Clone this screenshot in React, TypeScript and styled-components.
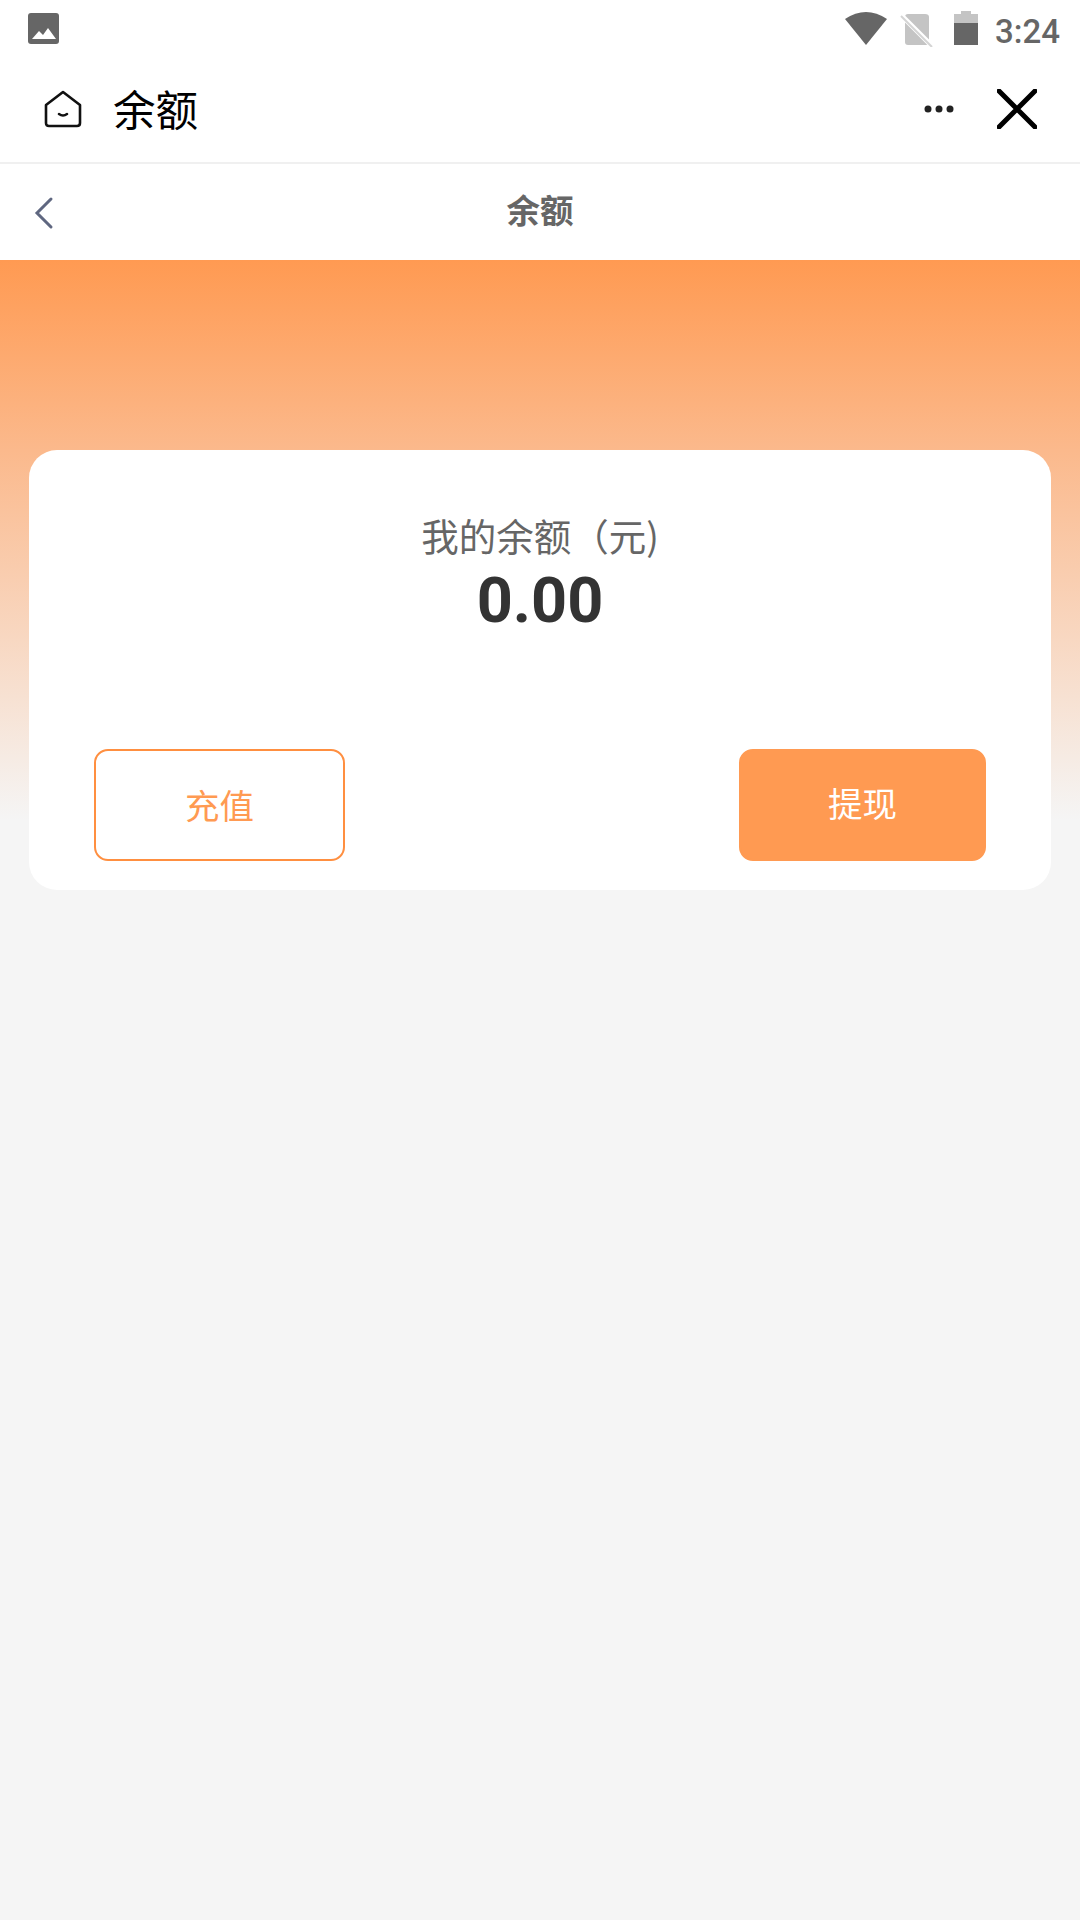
import React from "react";
import styled, { createGlobalStyle } from "styled-components";

const Global = createGlobalStyle`
  html, body { margin: 0; padding: 0; background: #f5f5f5; }
  * { box-sizing: border-box; }
  body { font-family: "Noto Sans CJK SC", "Noto Sans", sans-serif; }
`;

const Page = styled.div`
  width: 1080px;
  height: 1920px;
  display: flex;
  flex-direction: column;
  background: #f5f5f5;
  overflow: hidden;
`;

const StatusBar = styled.div`
  height: 60px;
  background: #fff;
  display: flex;
  align-items: flex-start;
  justify-content: space-between;
  padding: 12px 20px 0 28px;
`;

const StatusRight = styled.div`
  display: flex;
  align-items: flex-start;
`;

const StatusIcon = styled.svg<{ $ml: number; $mt?: number }>`
  display: block;
  margin-left: ${(p) => p.$ml}px;
  margin-top: ${(p) => p.$mt ?? 0}px;
`;

const Time = styled.span`
  font: 500 33px/1 Roboto, sans-serif;
  color: #666;
  margin-left: 17px;
  margin-top: 3px;
`;

const TitleBar = styled.div`
  height: 104px;
  background: #fff;
  display: flex;
  align-items: center;
  padding: 0 0 0 44px;
  border-bottom: 2px solid #f0f0f0;
`;

const TitleText = styled.span`
  font-size: 42.5px;
  line-height: 1;
  color: #000;
  margin-left: 31px;
  padding-bottom: 6px;
  flex: 1;
`;

const Dots = styled.svg`
  display: block;
  margin-right: 43px;
`;

const CloseIcon = styled.svg`
  display: block;
  margin-right: 43px;
`;

const NavBar = styled.div`
  height: 96px;
  background: #fff;
  display: flex;
  align-items: center;
  justify-content: center;
  position: relative;
`;

const BackIcon = styled.svg`
  position: absolute;
  left: 34px;
  top: 32px;
`;

const NavTitle = styled.span`
  font-size: 33.5px;
  font-weight: 700;
  color: #666;
  line-height: 1;
  padding-bottom: 6px;
`;

const Content = styled.div`
  flex: 1;
  padding: 190px 29px 0;
  background: linear-gradient(180deg, #ff9a52 0%, #fbb98c 34%, #f5f5f5 100%) no-repeat;
  background-size: 100% 560px;
`;

const Card = styled.div`
  height: 440px;
  background: #fff;
  border-radius: 28px;
  display: flex;
  flex-direction: column;
  align-items: center;
  padding: 63px 65px 0;
`;

const BalanceLabel = styled.div`
  font-size: 37.5px;
  line-height: 44px;
  color: #666;
`;

const BalanceValue = styled.div`
  font: 700 63px/1 Roboto, sans-serif;
  color: #333;
  margin-top: 12px;
`;

const Actions = styled.div`
  margin-top: auto;
  margin-bottom: 29px;
  width: 100%;
  display: flex;
  justify-content: space-between;
`;

const ActionButton = styled.div<{ $filled?: boolean }>`
  height: 112px;
  width: ${(p) => (p.$filled ? 247 : 251)}px;
  border-radius: 14px;
  display: flex;
  align-items: center;
  justify-content: center;
  font-size: 34.5px;
  line-height: 1;
  border: 2px solid ${(p) => (p.$filled ? "#ff9a52" : "#ff8f40")};
  background: ${(p) => (p.$filled ? "#ff9a52" : "#fff")};
  color: ${(p) => (p.$filled ? "#fff" : "#ff9a52")};
  padding-bottom: ${(p) => (p.$filled ? 5 : 2)}px;
`;

export default function App() {
  return (
    <Page>
      <Global />
      <StatusBar>
        <svg width="31" height="32" viewBox="0 0 31 32" style={{ display: "block", marginTop: 1 }}>
          <rect width="31" height="31" rx="3" fill="#666" />
          <path d="M4 26 L11 18 L15 22 L20 15 L28 26 Z" fill="#fff" />
        </svg>
        <StatusRight>
          <StatusIcon $ml={0} width="42" height="34" viewBox="0 0 42 34">
            <path d="M0 7 Q21 -7 42 7 L21 33 Z" fill="#666" />
          </StatusIcon>
          <StatusIcon $ml={13} $mt={1} width="34" height="34" viewBox="0 0 34 34">
            <path d="M5 4 Q5 1 8 1 H25 Q29 1 29 4 V29 Q29 32 26 32 H8 Q5 32 5 29 Z" fill="#c4c4c4" />
            <path d="M1 2 L33 34" stroke="#fff" strokeWidth="5" />
            <path d="M1 3 L32 34" stroke="#d4d4d4" strokeWidth="2" />
          </StatusIcon>
          <StatusIcon $ml={20} $mt={-1} width="24" height="35" viewBox="0 0 24 35">
            <path d="M7 0 H17 V3 H24 V34 H0 V3 H7 Z" fill="#c4c4c4" />
            <rect x="0" y="12" width="24" height="22" fill="#666" />
          </StatusIcon>
          <Time>3:24</Time>
        </StatusRight>
      </StatusBar>
      <TitleBar>
        <svg width="38" height="38" viewBox="0 0 38 38" fill="none" stroke="#111" strokeWidth="2.6" strokeLinejoin="round" strokeLinecap="round" style={{ display: "block", marginTop: -4 }}>
          <path d="M19 2 L36 15 V33 Q36 36 33 36 H5 Q2 36 2 33 V15 Z" />
          <path d="M15 24 Q19 27 23 24" />
        </svg>
        <TitleText>余额</TitleText>
        <Dots width="30" height="12" viewBox="0 0 30 12" fill="#222" style={{ marginTop: -4 }}>
          <circle cx="4" cy="6" r="3.5" />
          <circle cx="15" cy="6" r="3.5" />
          <circle cx="26" cy="6" r="3.5" />
        </Dots>
        <CloseIcon width="40" height="40" viewBox="0 0 40 40" stroke="#000" strokeWidth="5" strokeLinecap="round" style={{ marginTop: -4 }}>
          <path d="M2 2 L38 38 M38 2 L2 38" />
        </CloseIcon>
      </TitleBar>
      <NavBar>
        <BackIcon width="20" height="34" viewBox="0 0 20 34" fill="none" stroke="#5f6780" strokeWidth="3" strokeLinecap="round">
          <path d="M17 3 L3 17 L17 31" />
        </BackIcon>
        <NavTitle>余额</NavTitle>
      </NavBar>
      <Content>
        <Card>
          <BalanceLabel>我的余额（元)</BalanceLabel>
          <BalanceValue>0.00</BalanceValue>
          <Actions>
            <ActionButton>充值</ActionButton>
            <ActionButton $filled>提现</ActionButton>
          </Actions>
        </Card>
      </Content>
    </Page>
  );
}
